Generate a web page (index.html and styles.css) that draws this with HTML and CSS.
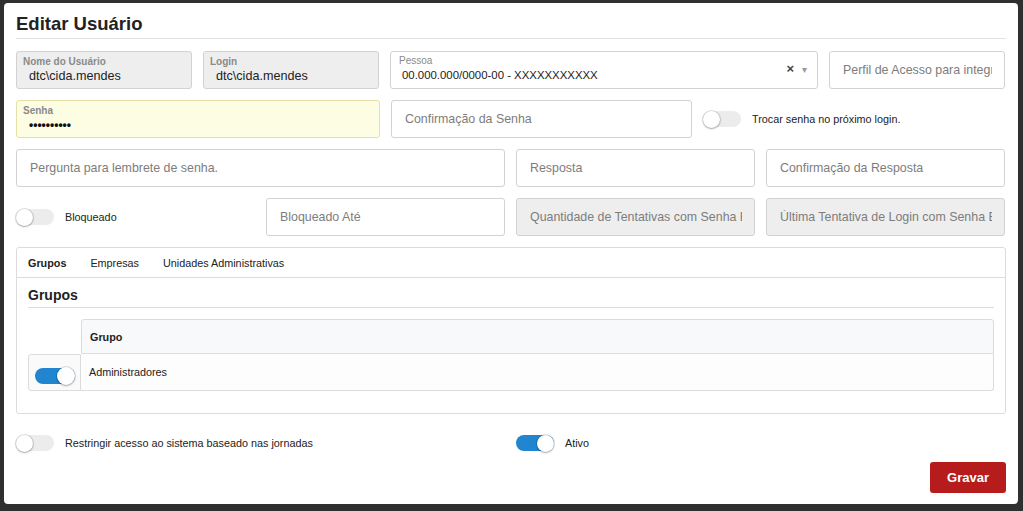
FILE: index.html
```html
<!DOCTYPE html>
<html lang="pt-BR">
<head>
<meta charset="utf-8">
<title>Editar Usuário</title>
<link rel="stylesheet" href="styles.css">
</head>
<body>
<div class="modal">
  <div class="modal-header"><h1 class="title">Editar Usuário</h1></div>

  <div class="form">
    <div class="row row1">
      <div class="field filled disabled">
        <span class="flabel bold">Nome do Usuário</span>
        <span class="fvalue">dtc\cida.mendes</span>
      </div>
      <div class="field filled disabled">
        <span class="flabel bold">Login</span>
        <span class="fvalue">dtc\cida.mendes</span>
      </div>
      <div class="field filled select">
        <div class="select-text">
          <span class="flabel">Pessoa</span>
          <span class="fvalue small">00.000.000/0000-00 - XXXXXXXXXXX</span>
        </div>
        <span class="clear">×</span>
        <span class="caret">▾</span>
      </div>
      <div class="field placeholder"><span class="ph">Perfil de Acesso para integração</span></div>
    </div>

    <div class="row row2">
      <div class="field filled autofill">
        <span class="flabel bold">Senha</span>
        <span class="fvalue dots">••••••••••</span>
      </div>
      <div class="field placeholder"><span class="ph">Confirmação da Senha</span></div>
      <div class="switch-cell">
        <span class="toggle"><span class="knob"></span></span>
        <span class="switch-label">Trocar senha no próximo login.</span>
      </div>
    </div>

    <div class="row row3">
      <div class="field placeholder"><span class="ph">Pergunta para lembrete de senha.</span></div>
      <div class="field placeholder"><span class="ph">Resposta</span></div>
      <div class="field placeholder"><span class="ph">Confirmação da Resposta</span></div>
    </div>

    <div class="row row4">
      <div class="switch-cell">
        <span class="toggle"><span class="knob"></span></span>
        <span class="switch-label">Bloqueado</span>
      </div>
      <div class="field placeholder"><span class="ph">Bloqueado Até</span></div>
      <div class="field placeholder disabled"><span class="ph">Quantidade de Tentativas com Senha Errada</span></div>
      <div class="field placeholder disabled"><span class="ph">Última Tentativa de Login com Senha Errada</span></div>
    </div>
  </div>

  <div class="tabs">
    <div class="tab-bar">
      <span class="tab active">Grupos</span>
      <span class="tab">Empresas</span>
      <span class="tab">Unidades Administrativas</span>
    </div>
    <div class="tab-body">
      <h2 class="section-title">Grupos</h2>
      <div class="table">
        <div class="trow thead">
          <div class="tcell sel"></div>
          <div class="tcell main">Grupo</div>
        </div>
        <div class="trow tbody">
          <div class="tcell sel"><span class="toggle on big"><span class="knob"></span></span></div>
          <div class="tcell main">Administradores</div>
        </div>
      </div>
    </div>
  </div>

  <div class="bottom-row">
    <div class="switch-cell">
      <span class="toggle"><span class="knob"></span></span>
      <span class="switch-label">Restringir acesso ao sistema baseado nas jornadas</span>
    </div>
    <div class="switch-cell">
      <span class="toggle on"><span class="knob"></span></span>
      <span class="switch-label">Ativo</span>
    </div>
  </div>

  <div class="actions">
    <button class="btn-save">Gravar</button>
  </div>
</div>
</body>
</html>
```

FILE: styles.css
```css
* { box-sizing: border-box; }

html, body {
  margin: 0;
  height: 100%;
}

body {
  background: #2f2f2f;
  font-family: "Liberation Sans", Arial, sans-serif;
  color: #222;
  overflow: hidden;
}

.modal {
  margin: 3px 5px 0 4px;
  height: 501px;
  background: #fff;
  border-radius: 4px;
  padding: 0 12px 11px 12px;
  display: flex;
  flex-direction: column;
}

.modal-header {
  padding-top: 10px;
  padding-bottom: 3px;
  border-bottom: 1px solid #e3e3e3;
}

.title {
  margin: 0;
  font-size: 18.5px;
  line-height: 22px;
  font-weight: bold;
  color: #222;
}

.form {
  display: flex;
  flex-direction: column;
  gap: 11px;
  margin-top: 12px;
}

.row {
  display: grid;
  column-gap: 11px;
  height: 38px;
}

.row1 { grid-template-columns: 176px 176px 428px 176px; }
.row2 { grid-template-columns: 364px 301px 302px; }
.row3 { grid-template-columns: 489px 239px 239px; }
.row4 { grid-template-columns: 239px 239px 239px 239px; }

.field {
  border: 1px solid #d2d2d2;
  border-radius: 3px;
  background: #fff;
  height: 100%;
  overflow: hidden;
  white-space: nowrap;
}

.field.disabled { background: #eeeeee; }

.field.autofill {
  background: #fdfde3;
  border-color: #e6e0a6;
}

.field.filled {
  display: flex;
  flex-direction: column;
  padding: 4px 6px 0 6px;
}

.flabel {
  font-size: 10px;
  line-height: 12px;
  color: #8a8a8a;
}

.flabel.bold { font-weight: bold; }

.fvalue {
  font-size: 12.6px;
  line-height: 16px;
  color: #222;
  padding-left: 6px;
}

.fvalue.small {
  font-size: 11.4px;
  padding-left: 3px;
}

.fvalue.dots {
  font-size: 12px;
  letter-spacing: 0;
  padding-left: 6px;
  font-weight: bold;
  color: #111;
}

.field.select {
  flex-direction: row;
  align-items: center;
  padding: 0 10px 0 8px;
}

.select-text {
  display: flex;
  flex-direction: column;
  flex: 1;
  padding-bottom: 2px;
}

.clear {
  font-size: 13px;
  font-weight: bold;
  color: #444;
  margin-right: 8px;
  margin-top: -4px;
}

.caret {
  font-size: 10px;
  color: #999;
  margin-top: -2px;
}

.field.placeholder {
  display: flex;
  align-items: center;
  padding: 0 12px 0 13px;
}

.ph {
  font-size: 12.4px;
  color: #7d7d7d;
  overflow: hidden;
  white-space: nowrap;
  display: block;
  width: 100%;
}

.switch-cell {
  display: flex;
  align-items: center;
  gap: 11px;
}

.switch-label {
  font-size: 10.8px;
  color: #222;
}

.toggle {
  width: 38px;
  height: 16px;
  border-radius: 8px;
  background: #ececec;
  display: inline-flex;
  align-items: center;
  flex-shrink: 0;
}

.toggle .knob {
  width: 17px;
  height: 17px;
  border-radius: 50%;
  background: #fff;
  box-shadow: 0 0 0 1px rgba(0,0,0,0.12), 0 1px 2px rgba(0,0,0,0.25);
}

.toggle.on {
  background: #2185d0;
  justify-content: flex-end;
}

.toggle.big {
  width: 40px;
  height: 16px;
}

.toggle.big .knob {
  width: 18px;
  height: 18px;
}

.tabs {
  margin-top: 11px;
  border: 1px solid #dcdcdc;
  border-radius: 3px;
  height: 167px;
}

.tab-bar {
  height: 30px;
  border-bottom: 1px solid #dcdcdc;
  display: flex;
  align-items: center;
  padding-left: 11px;
  gap: 24px;
}

.tab {
  font-size: 10.8px;
  color: #222;
}

.tab.active { font-weight: bold; }

.tab-body {
  padding: 0 11px;
}

.section-title {
  margin: 0;
  font-size: 14px;
  font-weight: bold;
  line-height: 18px;
  padding-top: 8px;
  padding-bottom: 3px;
  border-bottom: 1px solid #dcdcdc;
  color: #222;
}

.table {
  margin-top: 11px;
  display: flex;
  flex-direction: column;
}

.trow {
  display: flex;
}

.tcell.sel {
  width: 53px;
  flex-shrink: 0;
  display: flex;
  align-items: center;
  justify-content: center;
}

.tcell.main {
  flex: 1;
  display: flex;
  align-items: center;
  padding-left: 8px;
  font-size: 10.8px;
  color: #222;
}

.thead { height: 35px; }

.thead .tcell.main {
  background: #f8f9fa;
  border: 1px solid #dcdcdc;
  border-radius: 3px 3px 0 0;
  font-weight: bold;
}

.tbody { height: 37px; }

.tbody .tcell.sel {
  background: #fafafa;
  border: 1px solid #dcdcdc;
  border-radius: 3px 0 0 3px;
  padding-top: 6px;
}

.tbody .tcell.main {
  background: #fdfdfd;
  border-bottom: 1px solid #dcdcdc;
  border-right: 1px solid #dcdcdc;
  border-radius: 0 0 3px 0;
  padding-left: 8px;
}

.bottom-row {
  margin-top: 21px;
  display: grid;
  grid-template-columns: 489px 489px;
  column-gap: 11px;
  height: 16px;
}

.actions {
  margin-top: auto;
  display: flex;
  justify-content: flex-end;
}

.btn-save {
  width: 76px;
  height: 31px;
  border: none;
  border-radius: 3px;
  background: #b71c1c;
  color: #fff;
  font-family: "Liberation Sans", Arial, sans-serif;
  font-size: 13px;
  font-weight: bold;
}
```
